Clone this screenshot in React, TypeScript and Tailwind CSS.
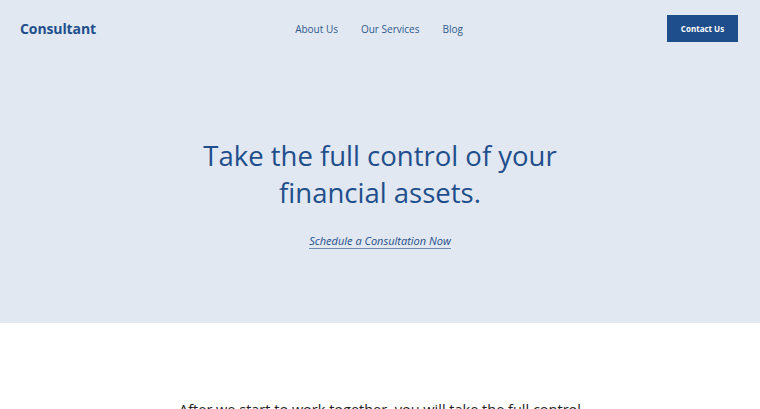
export default function App() {
  return (
    <div className="min-h-screen bg-white font-['Open_Sans',sans-serif]">
      <section className="bg-[#e1e8f1] h-[323px] flex flex-col">
        <header className="h-[57px] grid grid-cols-[1fr_auto_1fr] items-center pl-[20px] pr-[22px]">
          <a className="text-[14px] font-bold text-[#1f4e8c] tracking-[-0.1px]">Consultant</a>
          <nav className="flex items-center gap-[23px] text-[10px] text-[#2f5a8f] pt-[2px]">
            <a>About Us</a>
            <a>Our Services</a>
            <a>Blog</a>
          </nav>
          <div className="flex justify-end">
            <button className="w-[71px] h-[27px] bg-[#1f4e8c] text-white text-[8px] font-bold">
              Contact Us
            </button>
          </div>
        </header>
        <div className="flex flex-col items-center pt-[80px]">
          <h1 className="text-[27.5px] leading-[37px] text-[#1f4e8c] text-center font-normal">
            Take the full control of your
            <br />
            financial assets.
          </h1>
          <a className="mt-[22px] text-[11px] italic text-[#1f4e8c] border-b border-[#1f4e8c]/60 leading-[15px]">
            Schedule a Consultation Now
          </a>
        </div>
      </section>
      <section className="flex justify-center pt-[75px]">
        <p className="text-[14.5px] text-[#222] text-center max-w-[410px] leading-[24px]">
          After we start to work together, you will take the full control
          of your financial assets and plan your future with confidence.
        </p>
      </section>
    </div>
  );
}
